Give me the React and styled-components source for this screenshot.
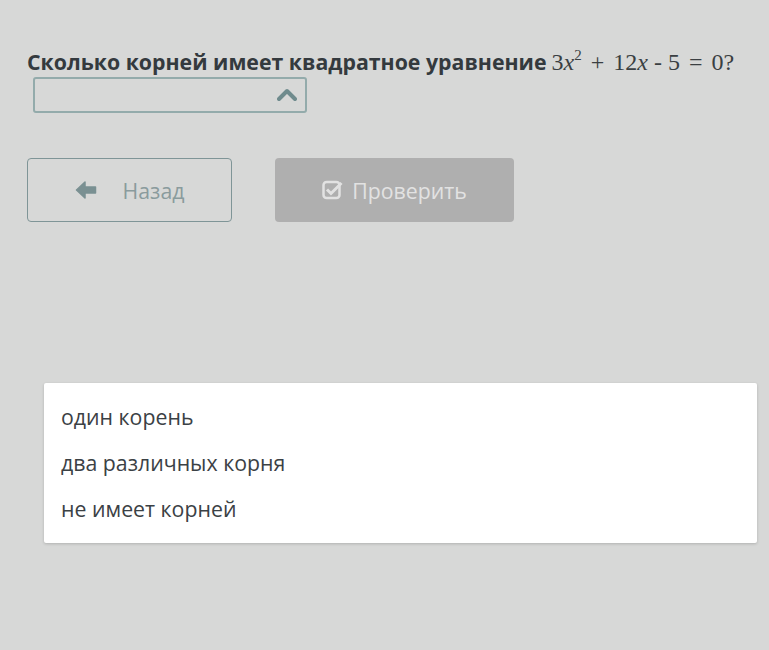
import React from "react"
import styled, { createGlobalStyle } from "styled-components"

const Global = createGlobalStyle`
  html, body {
    margin: 0;
    padding: 0;
    background: #d7d8d7;
    font-family: "Open Sans", "Noto Sans", sans-serif;
  }
`

const Page = styled.main`
  position: relative;
  width: 769px;
  height: 650px;
  padding: 47px 0 0 27px;
  box-sizing: border-box;
`

const Question = styled.h2`
  margin: 0;
  font-size: 21.3px;
  line-height: 30px;
  font-weight: 700;
  color: #343a3e;
  white-space: nowrap;
`

const Math = styled.span`
  font-family: "Liberation Serif", "DejaVu Serif", serif;
  font-weight: 400;
  font-size: 24px;
  line-height: 0;
  color: #3a3f42;
  margin-left: 5px;
  i {
    font-style: italic;
  }
  sup {
    font-size: 15px;
    vertical-align: 10px;
    line-height: 0;
  }
`

const Op = styled.span`
  padding: 0 ${p => p.space}px;
`

const Select = styled.div`
  margin: 0 0 0 6px;
  width: 274px;
  height: 36px;
  box-sizing: border-box;
  border: 2px solid #93abab;
  border-radius: 3px;
  display: flex;
  align-items: center;
  justify-content: flex-end;
  padding-right: 8px;
`

const Actions = styled.div`
  display: flex;
  gap: 43px;
  margin-top: 45px;
`

const Button = styled.div`
  height: 64px;
  width: ${p => p.w}px;
  box-sizing: border-box;
  border-radius: 4px;
  display: flex;
  align-items: center;
  justify-content: center;
  gap: ${p => p.gap}px;
  font-size: 21.3px;
  border: ${p => (p.outline ? "1px solid #7f9597" : "none")};
  background: ${p => (p.outline ? "transparent" : "#afafaf")};
  color: ${p => (p.outline ? "#8a9b9d" : "#e2e2e2")};
`

const Menu = styled.ul`
  position: absolute;
  left: 44px;
  top: 383px;
  width: 713px;
  margin: 0;
  padding: 11px 0 11px;
  list-style: none;
  background: #fff;
  border-radius: 2px;
  box-shadow: 0 1px 3px rgba(0, 0, 0, 0.18);
`

const Option = styled.li`
  padding: 0 17px;
  height: 46px;
  line-height: 46px;
  font-size: 21.3px;
  color: #3b4145;
`

const Chevron = () => (
  <svg width="20" height="14" viewBox="0 0 20 14">
    <path d="M2 11 L10 3 L18 11" fill="none" stroke="#6f8b8d" strokeWidth="4" strokeLinecap="round" strokeLinejoin="round" />
  </svg>
)

const ArrowLeft = () => (
  <svg width="22" height="18" viewBox="0 0 22 18">
    <path d="M1.5 9 L10 1 L10 6 L20.5 6 L20.5 12 L10 12 L10 17 Z" fill="#7a9092" strokeLinejoin="round" stroke="#7a9092" strokeWidth="1.5" />
  </svg>
)

const CheckSquare = () => (
  <svg width="22" height="20" viewBox="0 0 22 20">
    <rect x="1.5" y="2" width="16" height="16" rx="3" fill="none" stroke="#e2e2e2" strokeWidth="2.5" />
    <path d="M5 9.5 L9 13.5 L19.5 3" fill="none" stroke="#e2e2e2" strokeWidth="3" />
  </svg>
)

export default function App() {
  return (
    <Page>
      <Global />
      <Question>
        Сколько корней имеет квадратное уравнение
        <Math>
          3<i>x</i>
          <sup>2</sup>
          <Op space={9}>+</Op>12<i>x</i>
          <Op space={6}>-</Op>5<Op space={9}>=</Op>0?
        </Math>
      </Question>
      <Select>
        <Chevron />
      </Select>
      <Actions>
        <Button outline w={205} gap={26}>
          <ArrowLeft />
          Назад
        </Button>
        <Button w={239} gap={8}>
          <CheckSquare />
          Проверить
        </Button>
      </Actions>
      <Menu>
        <Option>один корень</Option>
        <Option>два различных корня</Option>
        <Option>не имеет корней</Option>
      </Menu>
    </Page>
  )
}
